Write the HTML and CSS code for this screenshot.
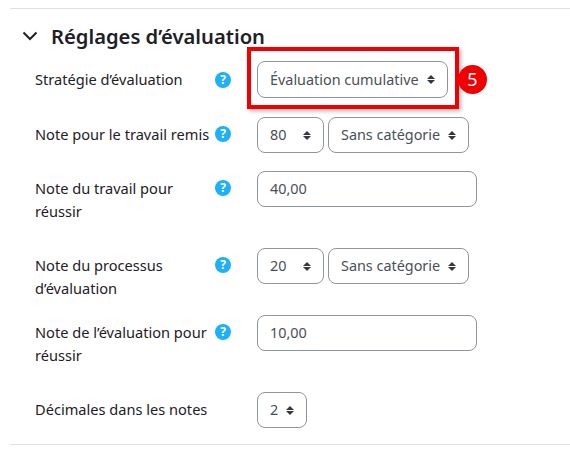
FILE: index.html
```html
<!DOCTYPE html>
<html lang="fr">

<head>
  <meta charset="UTF-8">
  <title>Réglages d’évaluation</title>
  <link rel="stylesheet" href="styles.css">
</head>

<body>
  <div class="section">
    <h3 class="section-title">
      <svg class="chevron" width="16" height="10" viewBox="0 0 16 10"><path d="M1.5 1.5 8 8l6.5-6.5" /></svg>
      Réglages d’évaluation
    </h3>

    <div class="row row-first">
      <label>Stratégie d’évaluation</label>
      <span class="help">?</span>
      <div class="controls">
        <div class="select select-strategy">Évaluation cumulative<i class="updown"></i></div>
      </div>
      <div class="callout"></div>
      <span class="badge">5</span>
    </div>

    <div class="row row-second">
      <label>Note pour le travail remis</label>
      <span class="help">?</span>
      <div class="controls">
        <div class="select select-num">80<i class="updown"></i></div>
        <div class="select">Sans catégorie<i class="updown"></i></div>
      </div>
    </div>

    <div class="row row-wide">
      <label>Note du travail pour réussir</label>
      <span class="help">?</span>
      <div class="controls">
        <div class="input">40,00</div>
      </div>
    </div>

    <div class="row row-mid">
      <label>Note du processus d’évaluation</label>
      <span class="help">?</span>
      <div class="controls">
        <div class="select select-num">20<i class="updown"></i></div>
        <div class="select">Sans catégorie<i class="updown"></i></div>
      </div>
    </div>

    <div class="row row-wide">
      <label>Note de l’évaluation pour réussir</label>
      <span class="help">?</span>
      <div class="controls">
        <div class="input">10,00</div>
      </div>
    </div>

    <div class="row">
      <label>Décimales dans les notes</label>
      <span class="help help-none"></span>
      <div class="controls">
        <div class="select select-small">2<i class="updown"></i></div>
      </div>
    </div>
  </div>
</body>

</html>
```

FILE: styles.css
```css
* {
  padding: 0;
  margin: 0;
  box-sizing: border-box;
}

body {
  font-family: "Noto Sans", "Open Sans", sans-serif;
  font-size: 14.6px;
  color: #1d2125;
  background-color: #fff;
  overflow: hidden;
}

.section {
  margin: 8px 0 0 10px;
  padding: 13px 0 0 0;
  height: 437px;
  border-top: 1px solid #dee2e6;
  border-bottom: 1px solid #dee2e6;
}

.section-title {
  display: flex;
  align-items: center;
  gap: 13px;
  margin-left: 12px;
  height: 27px;
  font-size: 20.2px;
  font-weight: 600;
  color: #1d2125;
}

.chevron {
  fill: none;
  stroke: #1d2125;
  stroke-width: 2;
}

.row {
  position: relative;
  display: flex;
  align-items: flex-start;
  margin-left: 25px;
  margin-bottom: 18px;
}

.row-first {
  margin-top: 12px;
  margin-bottom: 19px;
}

.row-wide {
  margin-bottom: 25px;
}

.row-mid {
  margin-bottom: 15px;
}

.row label {
  width: 180px;
  padding-top: 6px;
  line-height: 23px;
}

.row-first label {
  padding-top: 7px;
}

.help {
  width: 16px;
  height: 16px;
  margin-top: 9px;
  margin-right: 26px;
  border-radius: 50%;
  background-color: #1fb0f5;
  color: #fff;
  font-size: 12px;
  font-weight: 700;
  line-height: 16px;
  text-align: center;
}

.row-first .help {
  margin-top: 11px;
}

.help-none {
  background: none;
}

.controls {
  display: flex;
  gap: 4px;
}

.select,
.input {
  height: 36px;
  border: 1px solid #8f959e;
  border-radius: 8px;
  padding: 0 12px;
  font-size: 14.4px;
  line-height: 34px;
  color: #495057;
}

.row-first .select {
  height: 37px;
}

.select {
  display: flex;
  align-items: center;
  justify-content: space-between;
}

.select-strategy {
  width: 191px;
}

.select-num {
  width: 67px;
}

.select-small {
  width: 50px;
}

.input {
  width: 220px;
}

.updown {
  display: block;
  position: relative;
  width: 8px;
  height: 9px;
  margin-left: 8px;
}

.updown::before,
.updown::after {
  content: "";
  position: absolute;
  left: 0;
  border-left: 4px solid transparent;
  border-right: 4px solid transparent;
}

.updown::before {
  top: 0;
  border-bottom: 4px solid #343a40;
}

.updown::after {
  bottom: 0;
  border-top: 4px solid #343a40;
}

.callout {
  position: absolute;
  left: 212px;
  top: -14px;
  width: 212px;
  height: 62px;
  border: 4px solid #f00000;
  box-shadow: 2px 2px 4px rgba(0, 0, 0, .3);
}

.badge {
  position: absolute;
  left: 423px;
  top: 4px;
  width: 29px;
  height: 29px;
  border-radius: 50%;
  background-color: #f00000;
  color: #fff;
  font-size: 18px;
  line-height: 29px;
  text-align: center;
}
```
